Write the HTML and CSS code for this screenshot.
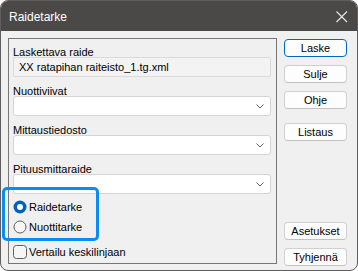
FILE: index.html
```html
<!DOCTYPE html>
<html lang="fi">
<head>
  <meta charset="UTF-8" />
  <title>Raidetarke</title>
  <link rel="stylesheet" href="styles.css">
</head>
<body>

  <div class="window">
    <div class="titlebar">
      <span class="title">Raidetarke</span>
      <svg class="close" width="12" height="12" viewBox="0 0 12 12">
        <path d="M0.5 0.5 L11 11 M11 0.5 L0.5 11" stroke="#e8e8e8" stroke-width="1.1" fill="none"/>
      </svg>
    </div>

    <div class="client">
      <div class="panel">
        <div class="field-group">
          <label>Laskettava raide</label>
          <div class="readonly">XX ratapihan raiteisto_1.tg.xml</div>
        </div>
        <div class="field-group">
          <label>Nuottiviivat</label>
          <div class="combo">
            <svg class="chevron" width="8" height="5" viewBox="0 0 8 5"><path d="M0.5 0.5 L4 4 L7.5 0.5" stroke="#5c5c5c" fill="none"/></svg>
          </div>
        </div>
        <div class="field-group">
          <label>Mittaustiedosto</label>
          <div class="combo">
            <svg class="chevron" width="8" height="5" viewBox="0 0 8 5"><path d="M0.5 0.5 L4 4 L7.5 0.5" stroke="#5c5c5c" fill="none"/></svg>
          </div>
        </div>
        <div class="field-group">
          <label>Pituusmittaraide</label>
          <div class="combo">
            <svg class="chevron" width="8" height="5" viewBox="0 0 8 5"><path d="M0.5 0.5 L4 4 L7.5 0.5" stroke="#5c5c5c" fill="none"/></svg>
          </div>
        </div>

        <div class="options">
          <div class="option">
            <svg width="14" height="14" viewBox="0 0 14 14">
              <circle cx="7" cy="7" r="6.5" fill="#0062bd"/>
              <circle cx="7" cy="7" r="3" fill="#ffffff"/>
            </svg>
            <span>Raidetarke</span>
          </div>
          <div class="option">
            <svg width="14" height="14" viewBox="0 0 14 14">
              <circle cx="7" cy="7" r="6" fill="#f6f6f6" stroke="#5f5f5f"/>
            </svg>
            <span>Nuottitarke</span>
          </div>
        </div>

        <div class="option check">
          <svg width="14" height="14" viewBox="0 0 14 14">
            <rect x="0.5" y="0.5" width="13" height="13" rx="3" fill="#f6f6f6" stroke="#5f5f5f"/>
          </svg>
          <span>Vertailu keskilinjaan</span>
        </div>
      </div>

      <div class="buttons">
        <button class="btn default">Laske</button>
        <button class="btn">Sulje</button>
        <button class="btn">Ohje</button>
        <button class="btn listaus">Listaus</button>
        <button class="btn bottom">Asetukset</button>
        <button class="btn">Tyhjennä</button>
      </div>
    </div>

    <div class="highlight"></div>
  </div>

</body>
</html>
```

FILE: styles.css
```css
body {
  margin: 0;
  background: #ffffff;
  font-family: "Liberation Sans", Arial, sans-serif;
  font-size: 11px;
  color: #000;
}

.window {
  position: relative;
  width: 358px;
  height: 271px;
  box-sizing: border-box;
  border: 1px solid #5e5e5e;
  border-radius: 8px;
  overflow: hidden;
  background: #f0f0f0;
  display: flex;
  flex-direction: column;
}

.titlebar {
  height: 30px;
  background: #4b4947;
  display: flex;
  align-items: center;
  justify-content: space-between;
  padding: 0 9px 0 8px;
  flex-shrink: 0;
}

.title {
  color: #ffffff;
  font-size: 12px;
  padding-top: 1px;
}

.close {
  margin-top: 1px;
}

.client {
  flex: 1;
  display: flex;
  gap: 7px;
  padding: 7px 9px 6px 7px;
}

.panel {
  width: 269px;
  box-sizing: border-box;
  border: 1px solid #777;
  padding: 6px 5px 0 4px;
  display: flex;
  flex-direction: column;
}

.field-group {
  margin-bottom: 7px;
}

.field-group label {
  display: block;
  line-height: 14px;
  height: 12px;
}

.readonly {
  height: 20px;
  box-sizing: border-box;
  border: 1px solid #dadada;
  background: #f3f3f3;
  border-radius: 2px;
  padding-left: 5px;
  line-height: 18px;
}

.combo {
  height: 20px;
  box-sizing: border-box;
  border: 1px solid #d4d4d4;
  border-radius: 3px;
  background: #ffffff;
  display: flex;
  align-items: center;
  justify-content: flex-end;
  padding-right: 6px;
}

.options {
  margin-top: -4px;
}

.option {
  display: flex;
  align-items: center;
  gap: 2px;
  height: 20px;
}

.option svg {
  flex-shrink: 0;
}

.check {
  margin-top: 5px;
}

.buttons {
  display: flex;
  flex-direction: column;
  gap: 8px;
  width: 63px;
  padding-top: 1px;
  margin-bottom: -2px;
}

.btn {
  height: 18px;
  padding: 0;
  background: #fdfdfd;
  border: 1px solid #d0d0d0;
  border-bottom-color: #c2c2c2;
  border-radius: 4px;
  font-family: "Liberation Sans", Arial, sans-serif;
  font-size: 11px;
  color: #000;
  line-height: 16px;
}

.btn.default {
  border-color: #0067c0;
}

.btn.listaus {
  margin-top: 6px;
}

.btn.bottom {
  margin-top: auto;
}

.highlight {
  position: absolute;
  left: 1px;
  top: 186px;
  width: 97px;
  height: 54px;
  box-sizing: border-box;
  border: 3px solid #0b8cf0;
  border-radius: 5px;
}
```
